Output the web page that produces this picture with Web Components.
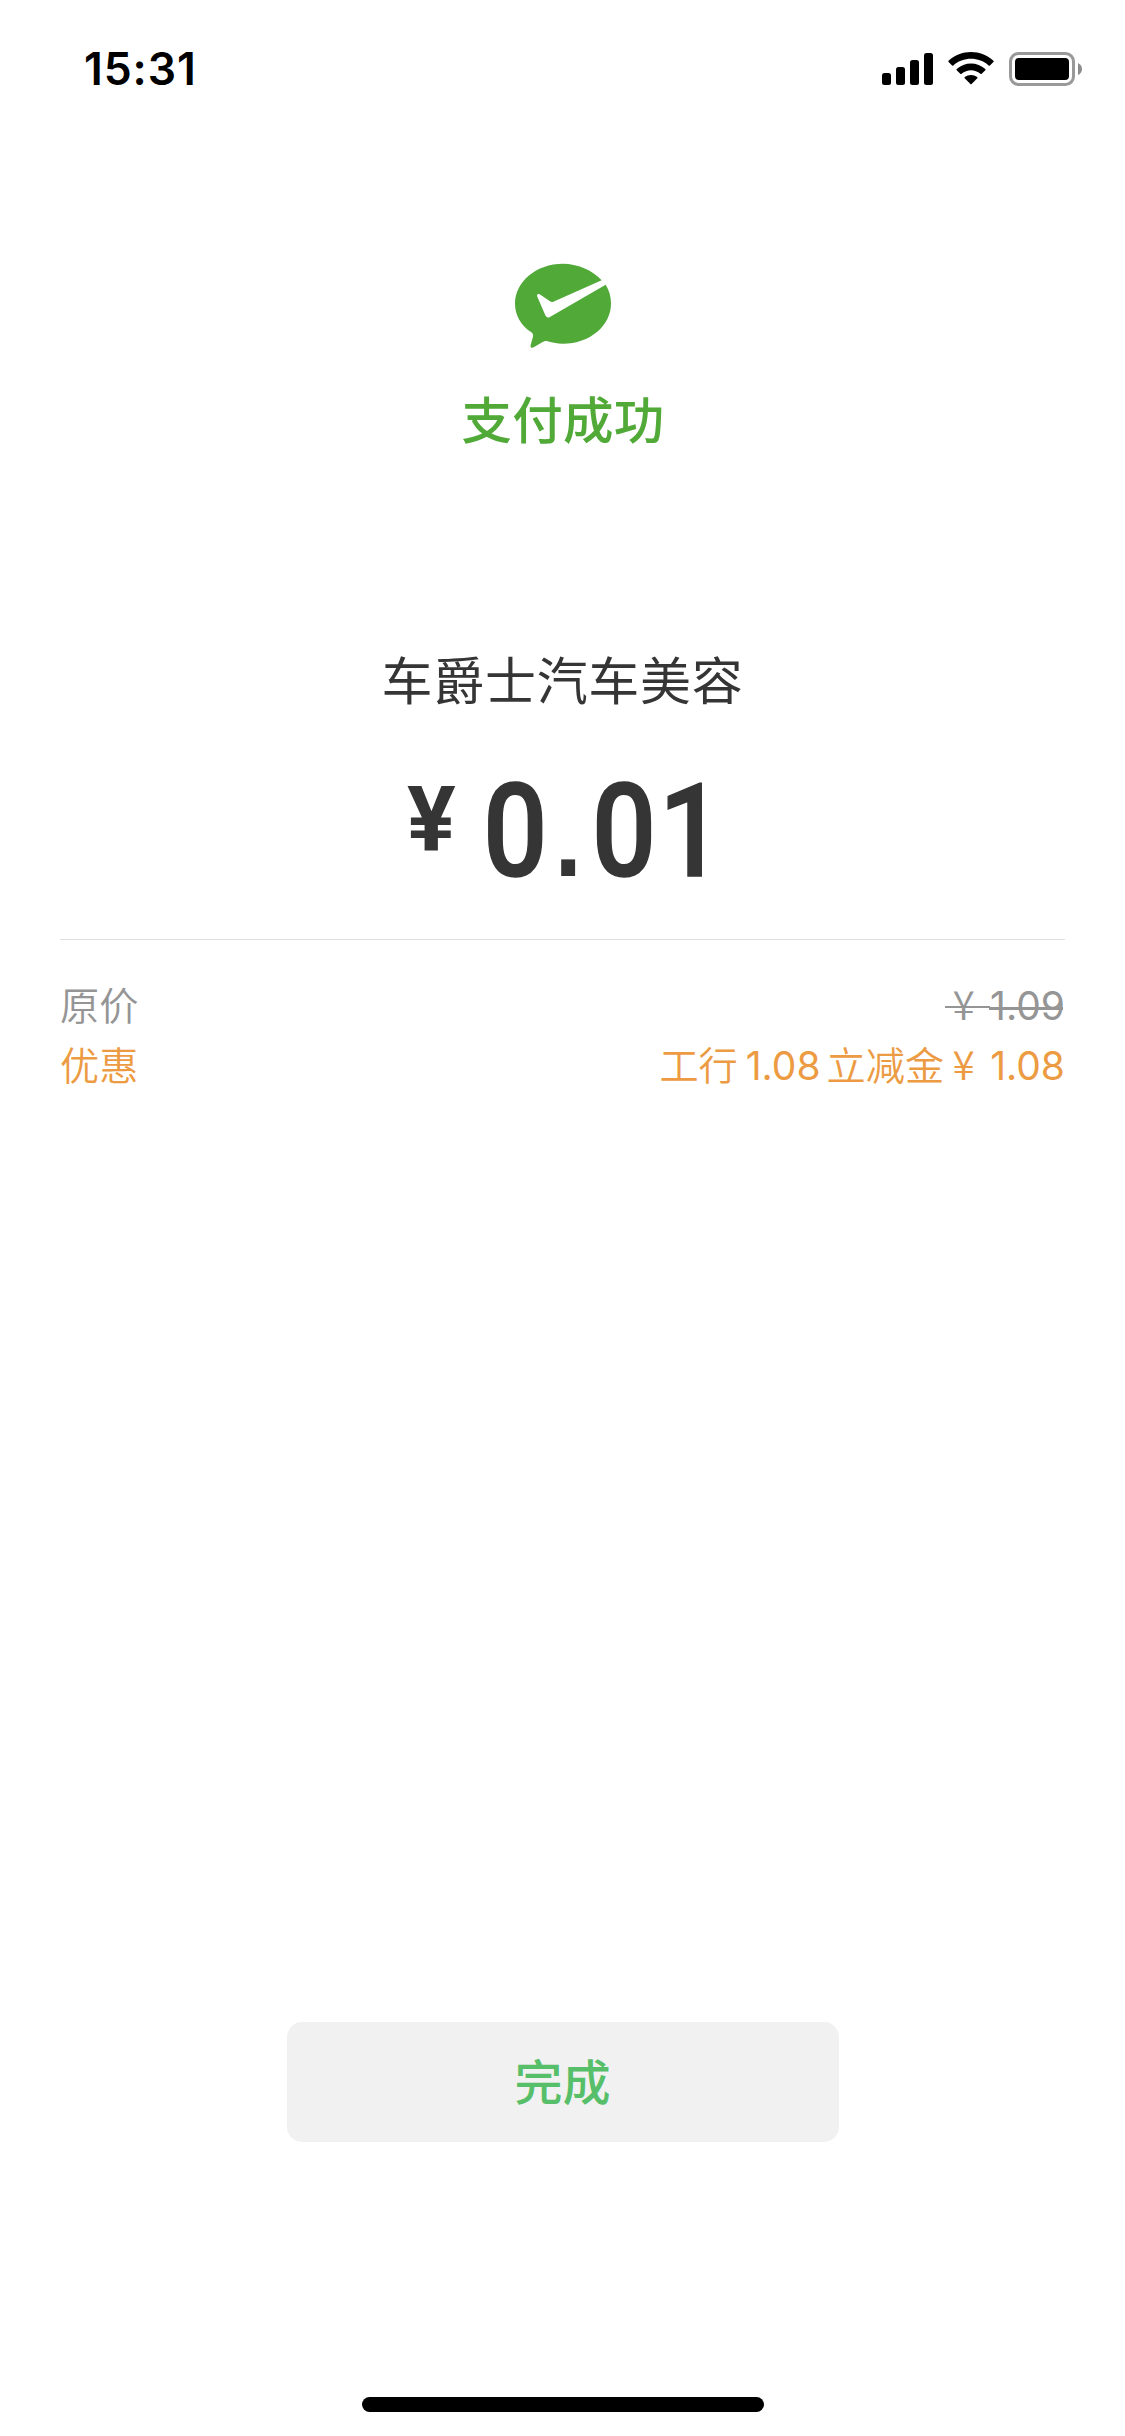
<!DOCTYPE html>
<html lang="zh-CN">
<head>
<meta charset="utf-8">
<title>支付成功</title>
<style>
  body {
    margin: 0;
    background: #fff;
    font-family: Inter, "Noto Sans CJK SC", sans-serif;
  }
</style>
</head>
<body>
<pay-page>
  <status-bar slot="top">15:31</status-bar>
  <pay-result>支付成功</pay-result>
  <pay-amount value="0.01">车爵士汽车美容</pay-amount>
  <pay-details>
    <pay-row class="old" value="1.09" struck>原价</pay-row>
    <pay-row class="discount" value="1.08">优惠<span slot="note">工行<b>1.08</b>立减金</span></pay-row>
  </pay-details>
  <done-button slot="bottom">完成</done-button>
  <home-bar slot="bottom"></home-bar>
</pay-page>

<script>
function define(name, html, setup) {
  const template = document.createElement('template');
  template.innerHTML = html;

  window.customElements.define(name, class extends HTMLElement {
    constructor() {
      super();
      this.attachShadow({ mode: 'open' });
      this.shadowRoot.appendChild(template.content.cloneNode(true));
    }

    connectedCallback() {
      if (setup) setup(this, this.shadowRoot);
    }
  });
}

define('pay-page', `
  <style>
    :host {
      display: flex;
      flex-direction: column;
      width: 1125px;
      height: 2436px;
      overflow: hidden;
    }

    main {
      flex: 1;
      display: flex;
      flex-direction: column;
    }

    footer {
      display: flex;
      flex-direction: column;
      align-items: center;
    }
  </style>
  <slot name="top"></slot>
  <main><slot></slot></main>
  <footer><slot name="bottom"></slot></footer>
`);

define('status-bar', `
  <style>
    :host {
      display: flex;
      justify-content: space-between;
      align-items: center;
      box-sizing: border-box;
      height: 138px;
      padding: 0 42px 0 84px;
      color: #000;
      font-size: 44.5px;
      font-weight: 600;
      letter-spacing: 0.9px;
    }

    .icons {
      display: flex;
      align-items: center;
    }

    svg {
      display: block;
    }
  </style>
  <span><slot></slot></span>
  <div class="icons">
    <svg width="201" height="34" viewBox="0 0 201 34">
      <rect x="0" y="21" width="9" height="12" rx="2.5"/>
      <rect x="14" y="15" width="9" height="18" rx="2.5"/>
      <rect x="28" y="8" width="9" height="25" rx="2.5"/>
      <rect x="42" y="1" width="9" height="32" rx="2.5"/>
      <path d="M66.600 10 Q66 9.400 66.600 8.800 C78.500 -2.900 99.500 -2.900 111.400 8.800 Q112 9.400 111.400 10 L107.900 13.500 Q107.300 14.100 106.600 13.500 C97 4.600 81 4.600 71.400 13.500 Q70.700 14.100 70.100 13.500 Z"/>
      <path d="M74.700 18.200 Q74.100 17.600 74.700 17 C82.600 9.500 95.400 9.500 103.300 17 Q103.900 17.600 103.300 18.200 L99.700 21.800 Q99.100 22.400 98.400 21.800 C93 17 85 17 79.600 21.800 Q78.900 22.400 78.300 21.800 Z"/>
      <path d="M82.700 26.300 Q82.100 25.700 82.800 25.100 C86.400 22.200 91.600 22.200 95.200 25.100 Q95.900 25.700 95.300 26.300 L89.600 32 Q89 32.600 88.400 32 Z"/>
      <rect x="128.500" y="1.500" width="63" height="31" rx="8" fill="none" stroke="#999" stroke-width="3"/>
      <rect x="133" y="6" width="54" height="22" rx="4"/>
      <path d="M196 11 Q200 13 200 17 Q200 21 196 23 Z" fill="#8c8c8c"/>
    </svg>
  </div>
`);

define('pay-result', `
  <style>
    :host {
      display: flex;
      flex-direction: column;
      align-items: center;
      padding-top: 112px;
      color: #51a938;
    }

    svg {
      display: block;
      width: 125px;
      height: 110px;
    }

    .title {
      margin-top: 23px;
      padding-left: 1px;
      line-height: 76px;
      font-size: 50.5px;
      font-weight: 500;
      letter-spacing: 0.3px;
    }
  </style>
  <svg viewBox="0 0 375 330" fill="currentColor">
    <path d="M189 41 C231 41 278 60 305 91 L160 155 Q155 157 150 154 L119 133 Q111 129 111 138 L136 196 Q141 207 151 200 L317 104 C328 121 333 140 333 161 C333 227 269 281 189 281 C170 281 154 277 140 273 Q134 272 128 276 L101 292 Q90 297 92 285 L99 260 Q101 251 93 246 C63 226 45 195 45 161 C45 95 109 41 189 41 Z"/>
  </svg>
  <span class="title"><slot></slot></span>
`);

define('pay-amount', `
  <style>
    :host {
      display: flex;
      flex-direction: column;
      align-items: center;
      margin: 185px 60px 0;
      height: 295px;
      border-bottom: 1px solid #dfdfdf;
      color: #353535;
    }

    .payee {
      line-height: 76px;
      font-size: 51px;
      letter-spacing: 0.7px;
    }

    .money {
      display: flex;
      align-items: flex-start;
      gap: 27px;
      margin-top: 37px;
      padding-left: 41px;
      font-family: Roboto, sans-serif;
      font-weight: 500;
      line-height: 150px;
    }

    .sign {
      font-size: 91px;
      font-weight: 700;
      line-height: 126px;
    }

    /* narrow digits, slightly heavier than medium */
    #value {
      font-size: 129px;
      letter-spacing: 3px;
      transform: scaleX(0.88);
      transform-origin: left;
      -webkit-text-stroke: 1.5px currentColor;
    }

    /* square decimal point */
    #value i {
      margin: 0 8px 0 5px;
      font: 700 112px/1 "Liberation Sans", sans-serif;
      -webkit-text-stroke: 0;
    }
  </style>
  <span class="payee"><slot></slot></span>
  <div class="money"><span class="sign">¥</span><span id="value"></span></div>
`, (host, root) => {
  root.getElementById('value').innerHTML = host.getAttribute('value').replace('.', '<i>.</i>');
});

define('pay-details', `
  <style>
    :host {
      display: flex;
      flex-direction: column;
      padding: 36px 60px 0;
    }

    ::slotted(.old) {
      color: #959595;
    }

    ::slotted(.discount) {
      color: #ec9b43;
    }
  </style>
  <slot></slot>
`);

define('pay-row', `
  <style>
    :host {
      display: flex;
      justify-content: space-between;
      height: 60px;
      font-family: "Noto Sans CJK SC", sans-serif;
      font-size: 39.2px;
      font-weight: 350;
      line-height: 54px;
    }

    .right,
    .price {
      display: flex;
    }

    .price {
      position: relative;
    }

    .sign {
      width: 46px;
      text-align: center;
      box-sizing: border-box;
      padding-right: 7px;
      font-size: 40.5px;
    }

    #value {
      font-family: Inter, sans-serif;
      font-weight: 400;
      font-size: 39px;
      line-height: 60px;
    }

    ::slotted(span) {
      white-space: nowrap;
    }

    /* the sign and the digits are struck at their own heights */
    :host([struck]) .sign::after,
    :host([struck]) #value::after {
      content: "";
      position: absolute;
      left: 1px;
      top: 30px;
      width: 45px;
      height: 2px;
      background: currentColor;
    }

    :host([struck]) #value::after {
      left: 45px;
      right: 2px;
      top: 31px;
      width: auto;
      height: 3px;
    }
  </style>
  <span><slot></slot></span>
  <div class="right">
    <slot name="note"></slot>
    <div class="price"><span class="sign">¥</span><span id="value"></span></div>
  </div>
`, (host, root) => {
  root.getElementById('value').textContent = host.getAttribute('value');
  // digits inside the note use the latin face
  host.querySelectorAll('b').forEach((b) => {
    b.style.cssText = 'font: 400 39px/1 Inter, sans-serif; margin: 0 6px 0 8px';
  });
});

define('done-button', `
  <style>
    :host {
      display: block;
      margin-bottom: 255px;
    }

    button {
      display: block;
      box-sizing: border-box;
      width: 552px;
      height: 120px;
      padding: 0 0 6px;
      border: 0;
      border-radius: 15px;
      background: #f1f1f1;
      color: #57bf6a;
      font: 500 48px "Noto Sans CJK SC", sans-serif;
    }
  </style>
  <button type="button"><slot></slot></button>
`);

define('home-bar', `
  <style>
    :host {
      display: block;
      width: 402px;
      height: 15px;
      margin-bottom: 24px;
      border-radius: 8px;
      background: #000;
    }
  </style>
`);
</script>
</body>
</html>
